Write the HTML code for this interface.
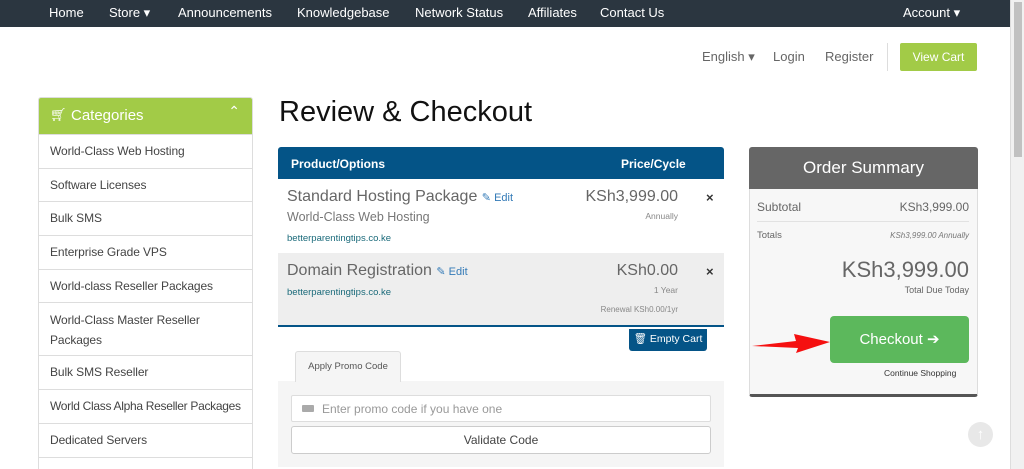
<!DOCTYPE html>
<html><head><style>
*{box-sizing:border-box;margin:0;padding:0}
html,body{width:1024px;height:469px;overflow:hidden}
body{background:#fff;font-family:"Liberation Sans",sans-serif;position:relative;color:#333}
.nav{position:absolute;left:0;top:0;width:1010px;height:27px;background:#2b3640;color:#fff;font-size:13px}
.nav span{position:absolute;top:5px}
.sb{position:absolute;right:0;top:0;width:14px;height:469px;background:#f1f1f1;border-left:1px solid #ddd}
.sb div{position:absolute;left:3px;top:2px;width:8px;height:155px;background:#c1c1c1}
.a{position:absolute;white-space:nowrap}
.cat{position:absolute;left:38px;top:97px;width:215px;height:380px;border:1px solid #ddd;border-radius:3px;overflow:hidden}
.cat .h{height:36px;background:#a2cb47;color:#fff;font-size:15px;padding:9px 0 0 32px;position:relative}
.cat .i{border-top:1px solid #ddd;font-size:12px;color:#444;padding:0 11px;height:33.7px;line-height:33px;white-space:nowrap;letter-spacing:-0.1px}
.cat .i2{height:53px;line-height:20px;padding-top:7px}
</style></head><body>
<div class="nav">
<span style="left:49px">Home</span><span style="left:109px">Store ▾</span><span style="left:178px">Announcements</span><span style="left:297px">Knowledgebase</span><span style="left:415px">Network Status</span><span style="left:528px">Affiliates</span><span style="left:600px">Contact Us</span><span style="left:903px">Account ▾</span>
</div>
<div class="sb"><div></div></div>
<div class="a" style="left:702px;top:49px;font-size:13px;color:#666">English ▾</div>
<div class="a" style="left:773px;top:49px;font-size:13px;color:#666">Login</div>
<div class="a" style="left:825px;top:49px;font-size:13px;color:#666">Register</div>
<div class="a" style="left:887px;top:43px;width:1px;height:28px;background:#ddd"></div>
<div class="a" style="left:900px;top:43px;width:77px;height:28px;background:#a2cb47;border-radius:2px;color:#fff;font-size:12px;text-align:center;line-height:28px">View Cart</div>

<div class="cat">
<div class="h"><span style="position:absolute;left:11px;top:9px;font-size:13px">🛒︎</span>Categories<span style="position:absolute;right:12px;top:5px;font-size:14px">⌃</span></div>
<div class="i">World-Class Web Hosting</div>
<div class="i">Software Licenses</div>
<div class="i">Bulk SMS</div>
<div class="i">Enterprise Grade VPS</div>
<div class="i">World-class Reseller Packages</div>
<div class="i i2">World-Class Master Reseller<br>Packages</div>
<div class="i">Bulk SMS Reseller</div>
<div class="i" style="letter-spacing:-0.3px">World Class Alpha Reseller Packages</div>
<div class="i">Dedicated Servers</div>
<div class="i"></div>
</div>

<div class="a" style="left:279px;top:96px;font-size:29px;color:#111">Review &amp; Checkout</div>

<div class="a" style="left:278px;top:147px;width:446px;height:32px;background:#045487;border-radius:3px 3px 0 0;color:#fff;font-size:12px;font-weight:bold">
<span class="a" style="left:13px;top:10px">Product/Options</span><span class="a" style="left:343px;top:10px">Price/Cycle</span></div>
<div class="a" style="left:287px;top:188px;font-size:16px;color:#666">Standard Hosting Package <span style="font-size:11px;color:#337ab7">✎ Edit</span></div>
<div class="a" style="left:287px;top:210px;font-size:12.5px;color:#777">World-Class Web Hosting</div>
<div class="a" style="left:287px;top:233px;font-size:9.5px;color:#1a6a7a">betterparentingtips.co.ke</div>
<div class="a" style="left:560px;top:188px;width:118px;text-align:right;font-size:16px;color:#666">KSh3,999.00</div>
<div class="a" style="left:560px;top:211px;width:118px;text-align:right;font-size:8.5px;color:#888">Annually</div>
<div class="a" style="left:706px;top:190px;font-size:13px;font-weight:bold">×</div>
<div class="a" style="left:278px;top:253px;width:446px;height:74px;background:#eee;border-bottom:2px solid #045487"></div>
<div class="a" style="left:287px;top:262px;font-size:16px;color:#666">Domain Registration <span style="font-size:11px;color:#337ab7">✎ Edit</span></div>
<div class="a" style="left:287px;top:287px;font-size:9.5px;color:#1a6a7a">betterparentingtips.co.ke</div>
<div class="a" style="left:560px;top:262px;width:118px;text-align:right;font-size:16px;color:#666">KSh0.00</div>
<div class="a" style="left:560px;top:285px;width:118px;text-align:right;font-size:8.5px;color:#888">1 Year</div>
<div class="a" style="left:560px;top:305px;width:118px;text-align:right;font-size:8px;color:#888">Renewal KSh0.00/1yr</div>
<div class="a" style="left:706px;top:264px;font-size:13px;font-weight:bold">×</div>
<div class="a" style="left:629px;top:329px;width:78px;height:22px;background:#045487;border-radius:0 0 3px 3px;color:#fff;font-size:10.5px;text-align:center;line-height:21px">🗑︎ Empty Cart</div>

<div class="a" style="left:278px;top:381px;width:446px;height:86px;background:#f5f5f5"></div>
<div class="a" style="left:295px;top:351px;width:106px;height:31px;background:#f5f5f5;border:1px solid #ddd;border-bottom:none;border-radius:3px 3px 0 0;font-size:9.5px;color:#555;text-align:center;line-height:30px">Apply Promo Code</div>
<div class="a" style="left:291px;top:395px;width:420px;height:27px;background:#fff;border:1px solid #ddd;border-radius:2px;font-size:12px;color:#999;padding:6px 0 0 30px"><span style="position:absolute;left:10px;top:9px;width:12px;height:7px;background:#aaa;border-radius:1px"></span>Enter promo code if you have one</div>
<div class="a" style="left:291px;top:426px;width:420px;height:28px;background:#fff;border:1px solid #ccc;border-radius:3px;font-size:12px;color:#444;text-align:center;line-height:26px">Validate Code</div>

<div class="a" style="left:749px;top:147px;width:229px;height:42px;background:#666;border-radius:3px 3px 0 0;color:#fff;font-size:17px;text-align:center;line-height:42px">Order Summary</div>
<div class="a" style="left:749px;top:189px;width:229px;height:208px;background:#f7f7f7;border:1px solid #ddd;border-top:none;border-bottom:3px solid #555;border-radius:0 0 3px 3px"></div>
<div class="a" style="left:757px;top:200px;font-size:12px;color:#666">Subtotal</div>
<div class="a" style="left:850px;top:200px;width:119px;text-align:right;font-size:12px;color:#666">KSh3,999.00</div>
<div class="a" style="left:757px;top:221px;width:212px;height:1px;background:#e2e2e2"></div>
<div class="a" style="left:757px;top:230px;font-size:9.5px;color:#666">Totals</div>
<div class="a" style="left:850px;top:231px;width:119px;text-align:right;font-size:8px;color:#777;font-style:italic">KSh3,999.00 Annually</div>
<div class="a" style="left:800px;top:257px;width:169px;text-align:right;font-size:22px;color:#666">KSh3,999.00</div>
<div class="a" style="left:800px;top:285px;width:169px;text-align:right;font-size:9px;color:#666">Total Due Today</div>
<div class="a" style="left:830px;top:316px;width:139px;height:47px;background:#5cb85c;border-radius:4px;color:#fff;font-size:15px;text-align:center;line-height:47px">Checkout ➔</div>
<div class="a" style="left:884px;top:368px;font-size:8.5px;color:#333">Continue Shopping</div>
<svg class="a" style="left:750px;top:325px" width="82" height="30"><polygon points="2,21 46,16 44,9 80,17 46,28 48,23" fill="#f51010"/></svg>
<div class="a" style="left:968px;top:422px;width:25px;height:25px;border-radius:50%;background:#e8e8e8;color:#fff;font-size:15px;text-align:center;line-height:25px;font-weight:bold">↑</div>
</body></html>
